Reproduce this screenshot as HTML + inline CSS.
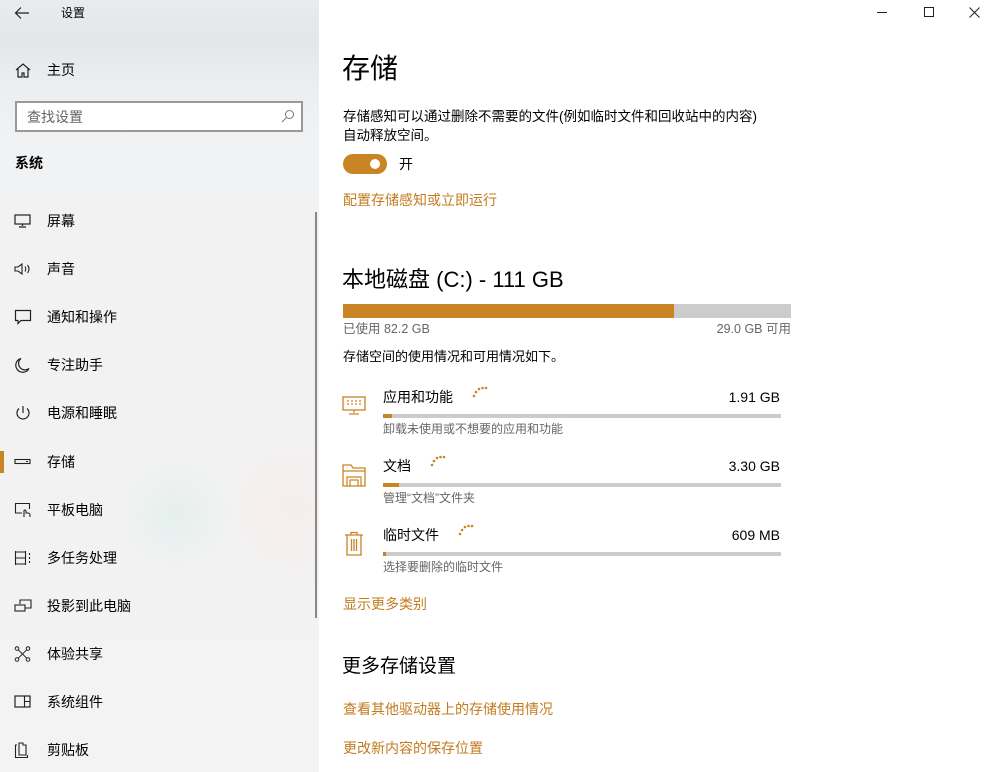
<!DOCTYPE html>
<html><head><meta charset="utf-8">
<style>
*{margin:0;padding:0;box-sizing:border-box}
body{width:994px;height:772px;overflow:hidden;font-family:"Liberation Sans","Noto Sans CJK SC",sans-serif;color:#000;background:#fff;position:relative}
.side{position:absolute;left:0;top:0;width:319px;height:772px;background:linear-gradient(180deg,#e9ebed 0,#e4e6e9 40px,#eceef0 90px,#f1f2f3 140px,#f2f2f2 300px,#f3f3f3 772px);overflow:hidden}
.blob1{position:absolute;left:115px;top:455px;width:120px;height:120px;border-radius:50%;background:radial-gradient(circle,rgba(210,234,230,.4),rgba(242,242,242,0) 70%)}
.blob2{position:absolute;left:215px;top:430px;width:160px;height:160px;border-radius:50%;background:radial-gradient(circle,rgba(248,228,226,.4),rgba(242,242,242,0) 70%)}
.abs{position:absolute}
.t{font-size:14px;line-height:20px;white-space:nowrap}
.nav{position:absolute;left:0;width:319px;height:20px}
.nav .ic{position:absolute;left:14px;top:2px;width:18px;height:16px}
.nav .lb{position:absolute;left:47px;top:0;font-size:14px;line-height:20px}
.search{position:absolute;left:15px;top:101px;width:288px;height:31px;border:2px solid #999;background:#fff}
.link{color:#c37b1e;font-size:14px}
.bar{position:absolute;height:4px;background:#ccc}
.bar i{display:block;height:4px;background:#c98424}
.sub{color:#666;font-size:12px}
</style></head><body>
<div class="side">
<div class="blob1"></div><div class="blob2"></div>
<svg class="abs" style="left:14px;top:6px" width="16" height="14" viewBox="0 0 16 14"><path d="M15 7H2M7 1.5L1.5 7 7 12.5" fill="none" stroke="#222" stroke-width="1.2"/></svg>
<div class="abs" style="left:61px;top:5px;font-size:12px;line-height:16px">设置</div>
<div class="nav" style="top:60px"><svg class="ic" viewBox="0 0 18 16"><path d="M2 8L9 2l7 6M4 6.5V15h4v-4h2v4h4V6.5" fill="none" stroke="#222" stroke-width="1.2"/></svg><div class="lb">主页</div></div>
<div class="search"><div class="abs" style="left:10px;top:4px;font-size:14px;line-height:20px;color:#666">查找设置</div>
<svg class="abs" style="left:264px;top:6px" width="14" height="14" viewBox="0 0 14 14"><circle cx="8.5" cy="5.5" r="4" fill="none" stroke="#777" stroke-width="1"/><path d="M5.5 8.5L1 13" stroke="#777"/></svg></div>
<div class="abs" style="left:15px;top:153px;font-size:14px;font-weight:bold;line-height:20px">系统</div>
<div class="abs" style="left:315px;top:212px;width:2px;height:406px;background:#888"></div>
<div class="nav" style="top:211px"><svg class="ic" viewBox="0 0 18 16"><rect x="1" y="2" width="15" height="9" fill="none" stroke="#222" stroke-width="1.2"/><path d="M8.5 11v2M5 14h7" stroke="#222" stroke-width="1.2"/></svg><div class="lb">屏幕</div></div>
<div class="nav" style="top:259px"><svg class="ic" viewBox="0 0 18 16"><path d="M1 6h3l4-3v10l-4-3H1z" fill="none" stroke="#222" stroke-width="1.1"/><path d="M11 5.5q1.5 2.5 0 5M13.5 4q3 4 0 8" fill="none" stroke="#222" stroke-width="1.1"/></svg><div class="lb">声音</div></div>
<div class="nav" style="top:307px"><svg class="ic" viewBox="0 0 18 16"><path d="M1.5 1.5h15v10H7l-3 3v-3H1.5z" fill="none" stroke="#222" stroke-width="1.2"/></svg><div class="lb">通知和操作</div></div>
<div class="nav" style="top:355px"><svg class="ic" viewBox="0 0 18 16"><path d="M7 1.5a7 7 0 1 0 8 10A6 6 0 0 1 7 1.5z" fill="none" stroke="#222" stroke-width="1.2"/></svg><div class="lb">专注助手</div></div>
<div class="nav" style="top:403px"><svg class="ic" viewBox="0 0 18 16"><path d="M5 3.5a6 6 0 1 0 8 0M9 1v7" fill="none" stroke="#222" stroke-width="1.2"/></svg><div class="lb">电源和睡眠</div></div>
<div class="abs" style="left:0;top:451px;width:4px;height:22px;background:#c98424"></div>
<div class="nav" style="top:452px"><svg class="ic" viewBox="0 0 18 16"><rect x="1" y="5.5" width="15" height="4" fill="none" stroke="#222" stroke-width="1.1"/><path d="M12 7.5h2" stroke="#222"/></svg><div class="lb">存储</div></div>
<div class="nav" style="top:500px"><svg class="ic" viewBox="0 0 18 16"><path d="M8 11H1.5V1.5h14V7" fill="none" stroke="#222" stroke-width="1.1"/><path d="M10 15v-6a1 1 0 0 1 2 0v2h2a2 2 0 0 1 2 2v2" fill="none" stroke="#222" stroke-width="1.1"/></svg><div class="lb">平板电脑</div></div>
<div class="nav" style="top:548px"><svg class="ic" viewBox="0 0 18 16"><path d="M1.5 1v14M11.5 1v14M1.5 2h10M1.5 14h10M1.5 8h10M15.5 3v2M15.5 7v2M15.5 11v2" fill="none" stroke="#222" stroke-width="1.1"/></svg><div class="lb">多任务处理</div></div>
<div class="nav" style="top:596px"><svg class="ic" viewBox="0 0 18 16"><path d="M6 6V2h11v8h-6" fill="none" stroke="#222" stroke-width="1.1"/><rect x="1" y="7" width="10" height="6" fill="none" stroke="#222" stroke-width="1.1"/></svg><div class="lb">投影到此电脑</div></div>
<div class="nav" style="top:644px"><svg class="ic" viewBox="0 0 18 16"><circle cx="3" cy="2.5" r="1.8" fill="none" stroke="#222"/><circle cx="14" cy="2.5" r="1.8" fill="none" stroke="#222"/><circle cx="3" cy="13.5" r="1.8" fill="none" stroke="#222"/><circle cx="14" cy="13.5" r="1.8" fill="none" stroke="#222"/><path d="M4.3 3.8l8.4 8.4M12.7 3.8l-8.4 8.4" stroke="#222"/></svg><div class="lb">体验共享</div></div>
<div class="nav" style="top:692px"><svg class="ic" viewBox="0 0 18 16"><rect x="1" y="2" width="15" height="11" fill="none" stroke="#222" stroke-width="1.2"/><path d="M10.5 2v11M10.5 7.5h5.5" stroke="#222" stroke-width="1.1"/></svg><div class="lb">系统组件</div></div>
<div class="nav" style="top:740px"><svg class="ic" viewBox="0 0 18 16"><path d="M3 3H1.5v12.5h12V13M5 1h4v2h3v10H5z" fill="none" stroke="#222" stroke-width="1.1"/></svg><div class="lb">剪贴板</div></div>
</div>

<div class="abs" style="left:877px;top:12px;width:10px;height:1px;background:#222"></div>
<div class="abs" style="left:924px;top:7px;width:10px;height:10px;border:1px solid #222"></div>
<svg class="abs" style="left:969px;top:7px" width="11" height="11" viewBox="0 0 11 11"><path d="M.5.5l10 10M10.5.5l-10 10" stroke="#222"/></svg>

<div class="abs" style="left:342px;top:50px;font-size:28px;line-height:38px">存储</div>
<div class="abs t" style="left:343px;top:107px;font-size:13.5px;line-height:19px">存储感知可以通过删除不需要的文件(例如临时文件和回收站中的内容)<br>自动释放空间。</div>
<div class="abs" style="left:343px;top:154px;width:44px;height:20px;border-radius:10px;background:#c98424"></div>
<div class="abs" style="left:370px;top:159px;width:10px;height:10px;border-radius:50%;background:#fff"></div>
<div class="abs t" style="left:399px;top:154px">开</div>
<div class="abs t link" style="left:343px;top:190px">配置存储感知或立即运行</div>

<div class="abs" style="left:342px;top:265px;font-size:22px;line-height:30px">本地磁盘 (C:) - 111 GB</div>
<div class="bar" style="left:343px;top:304px;width:448px;height:14px"><i style="width:331px;height:14px"></i></div>
<div class="abs t" style="left:343px;top:319px;font-size:12.5px;color:#666">已使用 82.2 GB</div>
<div class="abs t" style="left:683px;top:319px;font-size:12.5px;color:#666;width:108px;text-align:right">29.0 GB 可用</div>
<div class="abs t" style="left:343px;top:347px;font-size:13px">存储空间的使用情况和可用情况如下。</div>

<svg class="abs" style="left:342px;top:396px" width="26" height="20" viewBox="0 0 26 20"><rect x="1" y="1" width="22" height="13" fill="none" stroke="#c98424" stroke-width="1.3"/><path d="M5 5h2M9 5h2M13 5h2M17 5h2M5 8h2M9 8h2M13 8h2M17 8h2M12 14v3M7 18h10" stroke="#c98424" stroke-width="1.2"/></svg>
<div class="abs t" style="left:383px;top:387px">应用和功能</div>
<div class="abs t" style="left:700px;top:387px;width:80px;text-align:right">1.91 GB</div>
<div class="bar" style="left:383px;top:414px;width:398px"><i style="width:9px"></i></div>
<div class="abs t sub" style="left:383px;top:419px">卸载未使用或不想要的应用和功能</div>

<svg class="abs" style="left:342px;top:463px" width="26" height="24" viewBox="0 0 26 24"><path d="M1 23V2h8l2 3h12v18z" fill="none" stroke="#c98424" stroke-width="1.3"/><path d="M1 8h22M5 23v-9h14v9M8 23v-6h8v6" fill="none" stroke="#c98424" stroke-width="1.2"/></svg>
<div class="abs t" style="left:383px;top:456px">文档</div>
<div class="abs t" style="left:700px;top:456px;width:80px;text-align:right">3.30 GB</div>
<div class="bar" style="left:383px;top:483px;width:398px"><i style="width:16px"></i></div>
<div class="abs t sub" style="left:383px;top:488px">管理“文档”文件夹</div>

<svg class="abs" style="left:344px;top:531px" width="20" height="26" viewBox="0 0 20 26"><path d="M1 4h18M7 4V1.5h6V4M3 4v20h14V4M7.5 8v12M10 8v12M12.5 8v12" fill="none" stroke="#c98424" stroke-width="1.3"/></svg>
<div class="abs t" style="left:383px;top:525px">临时文件</div>
<div class="abs t" style="left:700px;top:525px;width:80px;text-align:right">609 MB</div>
<div class="bar" style="left:383px;top:552px;width:398px"><i style="width:3px"></i></div>
<div class="abs t sub" style="left:383px;top:557px">选择要删除的临时文件</div>

<svg class="abs" style="left:472px;top:386px" width="16" height="12"><g fill="#c98424"><circle cx="2" cy="10" r="1.3"/><circle cx="4" cy="6" r="1.3"/><circle cx="7" cy="3" r="1.3"/><circle cx="10.5" cy="2" r="1.3"/><circle cx="14" cy="2" r="1.3"/></g></svg>
<svg class="abs" style="left:430px;top:455px" width="16" height="12"><g fill="#c98424"><circle cx="2" cy="10" r="1.3"/><circle cx="4" cy="6" r="1.3"/><circle cx="7" cy="3" r="1.3"/><circle cx="10.5" cy="2" r="1.3"/><circle cx="14" cy="2" r="1.3"/></g></svg>
<svg class="abs" style="left:458px;top:524px" width="16" height="12"><g fill="#c98424"><circle cx="2" cy="10" r="1.3"/><circle cx="4" cy="6" r="1.3"/><circle cx="7" cy="3" r="1.3"/><circle cx="10.5" cy="2" r="1.3"/><circle cx="14" cy="2" r="1.3"/></g></svg>

<div class="abs t link" style="left:343px;top:594px">显示更多类别</div>
<div class="abs" style="left:342px;top:654px;font-size:19px;line-height:26px">更多存储设置</div>
<div class="abs t link" style="left:343px;top:699px">查看其他驱动器上的存储使用情况</div>
<div class="abs t link" style="left:343px;top:738px">更改新内容的保存位置</div>
</body></html>
